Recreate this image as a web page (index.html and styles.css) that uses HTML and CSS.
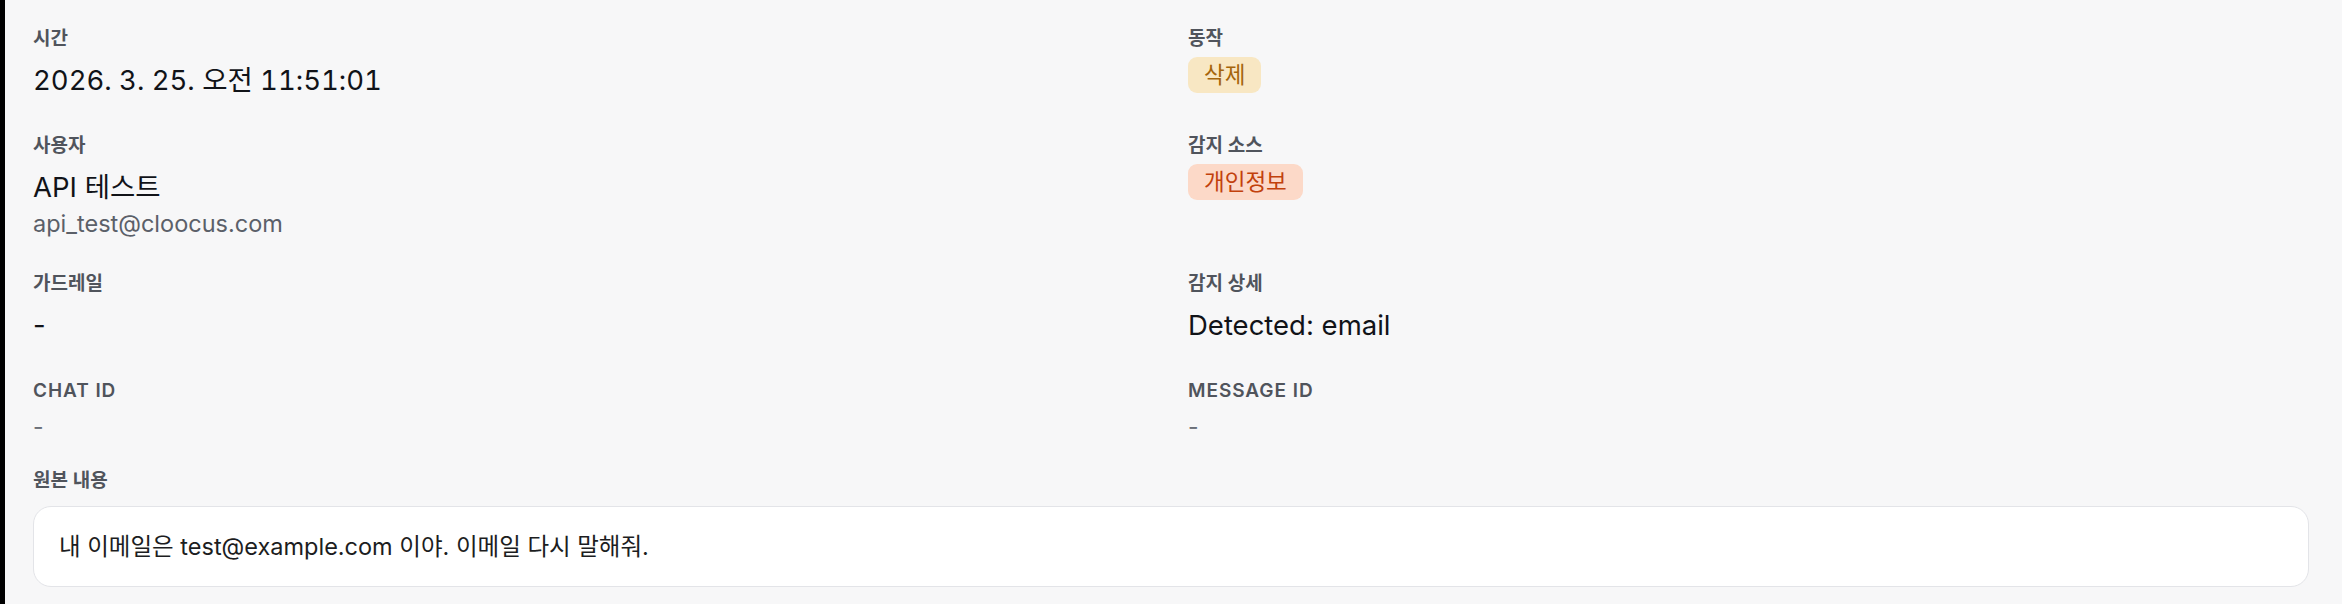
FILE: index.html
```html
<!DOCTYPE html>
<html lang="ko">
<head>
<meta charset="utf-8">
<title>로그 상세</title>
<link rel="stylesheet" href="styles.css">
</head>
<body>
<section class="panel">
  <div class="fields">
    <div class="field">
      <div class="label">시간</div>
      <div class="value nums">2026. 3. 25. 오전 11:51:01</div>
    </div>
    <div class="field">
      <div class="label">동작</div>
      <div class="badges"><span class="badge badge-amber">삭제</span></div>
    </div>
    <div class="field">
      <div class="label">사용자</div>
      <div class="value">API 테스트</div>
      <div class="sub">api_test@cloocus.com</div>
    </div>
    <div class="field">
      <div class="label">감지 소스</div>
      <div class="badges"><span class="badge badge-orange">개인정보</span></div>
    </div>
    <div class="field">
      <div class="label">가드레일</div>
      <div class="value">-</div>
    </div>
    <div class="field">
      <div class="label">감지 상세</div>
      <div class="value">Detected: email</div>
    </div>
    <div class="field">
      <div class="label upper">CHAT ID</div>
      <div class="muted">-</div>
    </div>
    <div class="field">
      <div class="label upper">MESSAGE ID</div>
      <div class="muted">-</div>
    </div>
  </div>
  <div class="content-section">
    <div class="label">원본 내용</div>
    <div class="content-box">내 이메일은 test@example.com 이야. 이메일 다시 말해줘.</div>
  </div>
</section>
</body>
</html>
```
FILE: styles.css
```css
* { box-sizing: border-box; }
html, body { margin: 0; padding: 0; background: #ffffff; }
body {
  font-family: Inter, "Noto Sans CJK KR", sans-serif;
  color: #111318;
}
.panel {
  width: 2342px;
  height: 604px;
  background: #f7f7f8;
  border-left: 5px solid #000000;
  padding: 25px 33px 0 28px;
}
.fields {
  display: grid;
  grid-template-columns: 1fr 1fr;
  column-gap: 34px;
  row-gap: 31px;
}
.field {
  display: flex;
  flex-direction: column;
  align-items: flex-start;
}
.label {
  font-size: 19px;
  line-height: 27px;
  font-weight: 600;
  color: #50545c;
  margin-bottom: 8px;
}
.label.upper { letter-spacing: 0.05em; }
.value {
  font-size: 27.5px;
  line-height: 41px;
  color: #111318;
}
.nums { font-variant-numeric: tabular-nums; }
.sub {
  font-size: 23.5px;
  line-height: 31px;
  color: #5b6069;
}
.muted {
  font-size: 23px;
  line-height: 31px;
  color: #6b7079;
}
.badges { margin-top: -3px; }
.badge {
  display: inline-block;
  font-size: 22.5px;
  line-height: 30px;
  padding: 3px 16px;
  border-radius: 9px;
}
.badge-amber { background: #f8e7c3; color: #a5650b; }
.badge-orange { background: #fcd9c8; color: #c2410c; }
.content-section { margin-top: 24px; }
.content-section .label { margin-bottom: 12px; }
.content-box {
  background: #ffffff;
  border: 1.5px solid #e3e4e8;
  border-radius: 18px;
  padding: 23px 25px;
  font-size: 23.5px;
  line-height: 33px;
  color: #1c1d21;
}
```
